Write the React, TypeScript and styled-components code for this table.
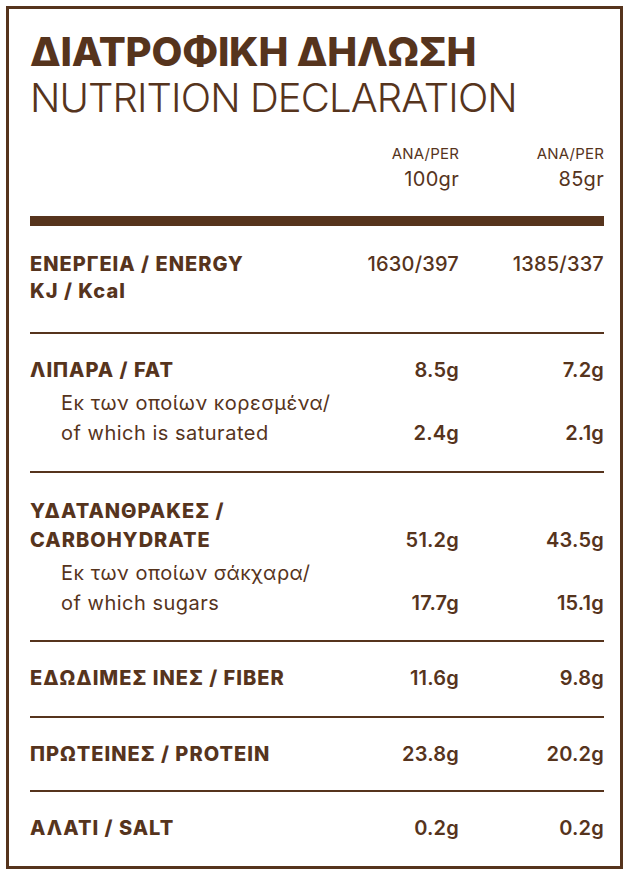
import React from "react";
import styled, { createGlobalStyle } from "styled-components";

const BROWN = "#56341d";

const GlobalStyle = createGlobalStyle`
  html, body {
    margin: 0;
    padding: 0;
    background: #ffffff;
  }
  body {
    font-family: Inter, "Noto Sans", sans-serif;
    color: ${BROWN};
  }
`;

const Frame = styled.div`
  box-sizing: border-box;
  width: 617px;
  height: 863px;
  margin: 6px;
  border: 3px solid ${BROWN};
  padding: 20px 16px 0 21px;
  overflow: hidden;
`;

const Title = styled.h1`
  margin: 0;
  font-size: 40px;
  line-height: 46px;
  font-weight: 800;
  letter-spacing: -0.2px;
`;

const Subtitle = styled.h2`
  margin: 0;
  font-size: 40px;
  line-height: 46px;
  font-weight: 300;
  letter-spacing: -0.9px;
`;

const Row = styled.div<{ $align?: "start" | "end" }>`
  display: grid;
  grid-template-columns: minmax(0, 1fr) 120px 145px;
  align-items: ${(p) => p.$align ?? "start"};
`;

const HeaderRow = styled(Row)`
  margin-top: 21px;
  margin-bottom: 24px;
`;

const ColHead = styled.div`
  text-align: right;
  font-size: 20px;
  line-height: 26px;
  font-weight: 400;
  letter-spacing: 0.3px;

  small {
    display: block;
    font-size: 15px;
    line-height: 24px;
    letter-spacing: 0.2px;
  }
`;

const ThickRule = styled.div`
  height: 10px;
  background: ${BROWN};
  margin-bottom: 3px;
`;

const Section = styled.section<{ $last?: boolean; $top?: number; $bottom?: number }>`
  padding: ${(p) => p.$top ?? 22}px 0 ${(p) => (p.$last ? 0 : p.$bottom ?? 23)}px;
  border-bottom: ${(p) => (p.$last ? "none" : `2px solid ${BROWN}`)};
`;

const Label = styled.div<{ $lh?: number }>`
  font-size: 20px;
  line-height: ${(p) => p.$lh ?? 29}px;
  font-weight: 800;
  letter-spacing: 1px;
  white-space: nowrap;
`;

const Value = styled.div`
  text-align: right;
  font-size: 20px;
  line-height: 29px;
  font-weight: 600;
  letter-spacing: 0.2px;
`;

const EnergyValue = styled(Value)`
  font-weight: 500;
  line-height: 27px;
`;

const SubBlock = styled(Row)`
  margin-top: 3px;
`;

const SubLabel = styled.div`
  padding-left: 31px;
  font-size: 20px;
  line-height: 30px;
  font-weight: 400;
  letter-spacing: 0.5px;
  white-space: nowrap;
`;

const SubValue = styled(Value)`
  line-height: 30px;
`;

type Nutrient = {
  label: React.ReactNode;
  per100: string;
  per85: string;
  top?: number;
  bottom?: number;
  sub?: { label: React.ReactNode; per100: string; per85: string };
};

const nutrients: Nutrient[] = [
  {
    label: "ΛΙΠΑΡΑ / FAT",
    per100: "8.5g",
    per85: "7.2g",
    sub: {
      label: (
        <>
          Εκ των οποίων κορεσμένα/
          <br />
          of which is saturated
        </>
      ),
      per100: "2.4g",
      per85: "2.1g",
    },
  },
  {
    label: (
      <>
        ΥΔΑΤΑΝΘΡΑΚΕΣ /
        <br />
        CARBOHYDRATE
      </>
    ),
    per100: "51.2g",
    per85: "43.5g",
    top: 24,
    bottom: 22,
    sub: {
      label: (
        <>
          Εκ των οποίων σάκχαρα/
          <br />
          of which sugars
        </>
      ),
      per100: "17.7g",
      per85: "15.1g",
    },
  },
  { label: "ΕΔΩΔΙΜΕΣ ΙΝΕΣ / FIBER", per100: "11.6g", per85: "9.8g" },
  { label: "ΠΡΩΤΕΙΝΕΣ / PROTEIN", per100: "23.8g", per85: "20.2g", bottom: 21 },
  { label: "ΑΛΑΤΙ / SALT", per100: "0.2g", per85: "0.2g" },
];

export default function App() {
  return (
    <>
      <GlobalStyle />
      <Frame>
        <Title>ΔΙΑΤΡΟΦΙΚΗ ΔΗΛΩΣΗ</Title>
        <Subtitle>NUTRITION DECLARATION</Subtitle>

        <HeaderRow>
          <span />
          <ColHead>
            <small>ΑΝΑ/PER</small>
            100gr
          </ColHead>
          <ColHead>
            <small>ΑΝΑ/PER</small>
            85gr
          </ColHead>
        </HeaderRow>

        <ThickRule />

        <Section $bottom={27}>
          <Row>
            <Label $lh={27}>
              ΕΝΕΡΓΕΙΑ / ENERGY
              <br />
              KJ / Kcal
            </Label>
            <EnergyValue>1630/397</EnergyValue>
            <EnergyValue>1385/337</EnergyValue>
          </Row>
        </Section>

        {nutrients.map((n, i) => (
          <Section
            key={i}
            $top={n.top}
            $bottom={n.bottom}
            $last={i === nutrients.length - 1}
          >
            <Row $align="end">
              <Label>{n.label}</Label>
              <Value>{n.per100}</Value>
              <Value>{n.per85}</Value>
            </Row>
            {n.sub && (
              <SubBlock $align="end">
                <SubLabel>{n.sub.label}</SubLabel>
                <SubValue>{n.sub.per100}</SubValue>
                <SubValue>{n.sub.per85}</SubValue>
              </SubBlock>
            )}
          </Section>
        ))}
      </Frame>
    </>
  );
}
